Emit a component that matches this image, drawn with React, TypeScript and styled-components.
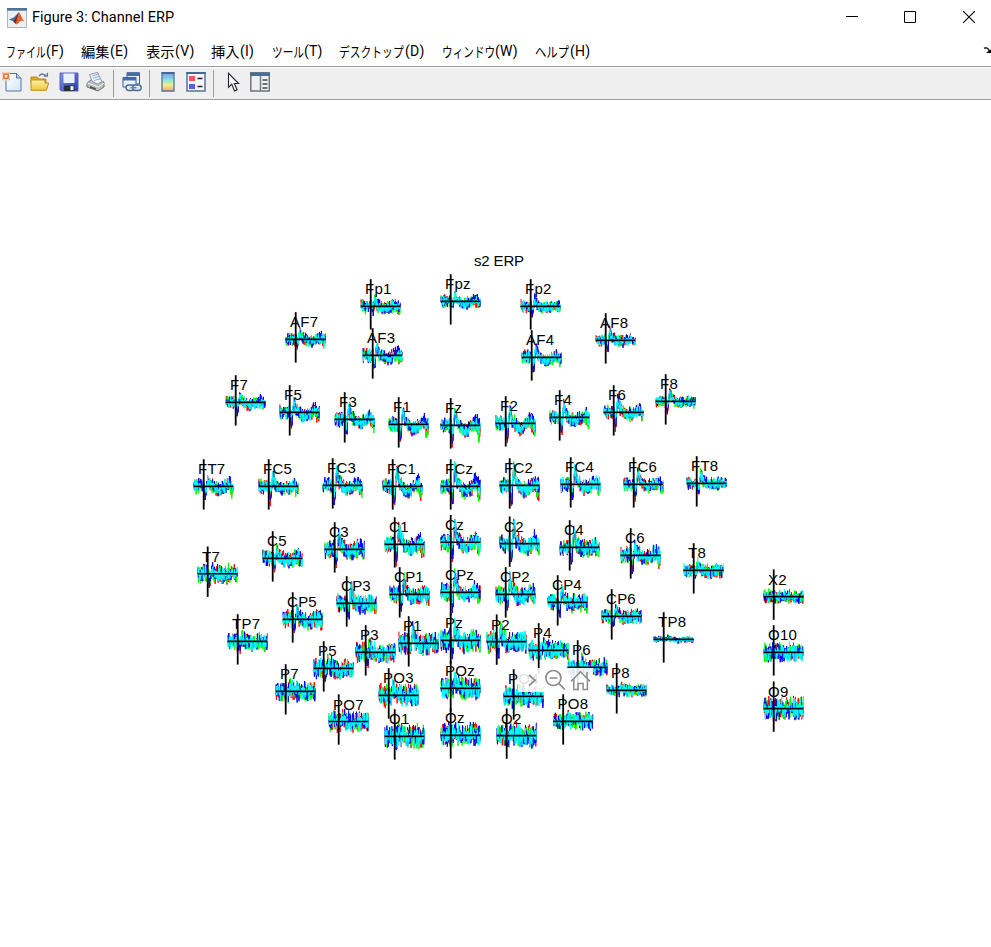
import React from "react";
import styled, { createGlobalStyle } from "styled-components";

const GlobalStyle = createGlobalStyle`
  html, body { margin: 0; padding: 0; background: #fff; }
  body { overflow: hidden; }
`;

const Window = styled.div`
  width: 991px;
  height: 947px;
  display: flex;
  flex-direction: column;
  background: #fff;
  color: #000;
  font-family: Roboto, "Noto Sans CJK JP", sans-serif;
`;

const TitleBar = styled.header`
  display: flex;
  align-items: center;
  height: 35px;
  padding-left: 7px;
  box-sizing: border-box;
`;

const AppIcon = styled.svg`
  width: 20px;
  height: 20px;
  margin-right: 5px;
`;

const Title = styled.h1`
  margin: 0;
  flex: 1;
  font-size: 14.5px;
  font-weight: 400;
  line-height: 20px;
  letter-spacing: 0.03px;
  white-space: nowrap;
`;

const CaptionButton = styled.button`
  width: 58.5px;
  height: 34px;
  padding: 0;
  border: 0;
  background: none;
  display: flex;
  align-items: center;
  justify-content: center;
`;

const CaptionButtons = styled.div`
  display: flex;
  margin: -1px -7px 0 0;
`;

const MenuBar = styled.nav`
  display: flex;
  align-items: center;
  height: 31px;
  padding-left: 6px;
`;

const MenuItem = styled.div<{ $width: number }>`
  width: ${(p) => p.$width}px;
  display: flex;
  font-size: 14px;
  line-height: 20px;
  letter-spacing: 0.2px;
  white-space: nowrap;
`;

const MenuWord = styled.span<{ $width: number; $scale: number }>`
  display: block;
  width: ${(p) => p.$width}px;
  transform: scaleX(${(p) => p.$scale});
  transform-origin: left center;
  font-family: "Noto Sans CJK JP", sans-serif;
  font-weight: 400;
  letter-spacing: 0;
`;

const DockArrow = styled.svg`
  width: 8px;
  height: 10px;
  margin-left: auto;
`;

const Toolbar = styled.div`
  display: flex;
  align-items: center;
  height: 34px;
  box-sizing: border-box;
  border-top: 1px solid #989898;
  border-bottom: 1px solid #a0a0a0;
  background: #efefef;
  box-shadow: inset 0 1px #fff;
`;

const ToolButton = styled.button<{ $gap?: number }>`
  width: 20px;
  height: 22px;
  padding: 0;
  margin: 0 0 2px ${(p) => p.$gap ?? 8}px;
  border: 0;
  background: none;
  svg { display: block; }
`;

const Separator = styled.div<{ $gap: number }>`
  width: 1px;
  height: 27px;
  margin-left: ${(p) => p.$gap}px;
  background: #9c9c9c;
`;

const Figure = styled.main`
  flex: 1;
  background: #fff;
`;

const Plot = styled.svg`
  display: block;
  width: 991px;
  height: 847px;
`;

const PlotText = styled.text<{ $tracking?: number }>`
  font-family: "Liberation Sans", Arial, sans-serif;
  font-size: 15px;
  letter-spacing: ${(p) => p.$tracking ?? 0.2}px;
  fill: #000;
`;

/* label, stimulus-axis x, baseline y, peak, dip, noise, slow drift */
type Channel = [string, number, number, number, number, number, number];

const channels: Channel[] = [
  ["Fp1", 370.7, 306.4, 7, 5, 5.6, 3],
  ["Fpz", 450.7, 301.4, 6, 5, 5.2, 3],
  ["Fp2", 530.7, 306.4, 8, 7, 5, 2],
  ["AF7", 295.7, 339.4, 8, 7, 5.4, 2],
  ["AF3", 372.7, 355.4, 12, 11, 5.8, 5],
  ["AF4", 531.7, 357.4, 13, 12, 5.6, 5],
  ["AF8", 605.7, 340.4, 12, 10, 5, 1],
  ["F7", 235.7, 402.4, 7, 10, 5.2, 3],
  ["F5", 289.7, 412.4, 13, 15, 5.8, 5],
  ["F3", 344.7, 419.4, 17, 15, 6, 6],
  ["F1", 398.7, 424.4, 18, 18, 6.2, 7],
  ["Fz", 450.7, 425.4, 18, 18, 6.2, 8],
  ["F2", 505.7, 423.4, 18, 18, 6.2, 7],
  ["F4", 559.7, 417.4, 16, 18, 6, 5],
  ["F6", 613.7, 412.4, 16, 17, 5.6, 3],
  ["F8", 665.7, 401.4, 12, 11, 4.6, 1],
  ["FT7", 203.7, 486.4, 7, 10, 6, 3],
  ["FC5", 268.7, 486.4, 12, 14, 6, 4],
  ["FC3", 332.7, 485.4, 19, 17, 6.2, 5],
  ["FC1", 392.7, 486.4, 21, 19, 6.4, 7],
  ["FCz", 450.7, 486.4, 24, 19, 6.6, 8],
  ["FC2", 509.7, 485.4, 21, 19, 6.4, 7],
  ["FC4", 570.7, 484.4, 19, 18, 6.2, 5],
  ["FC6", 633.7, 484.4, 15, 15, 5.6, 3],
  ["FT8", 696.7, 483.4, 12, 11, 5, 1],
  ["T7", 207.7, 573.7, 4, 8, 7.8, 2],
  ["C5", 272.7, 558.4, 10, 12, 6.8, 3],
  ["C3", 334.7, 549.4, 20, 17, 7.4, 3],
  ["C1", 394.7, 544.4, 23, 18, 7.4, 5],
  ["Cz", 450.7, 542.2, 23, 17, 7.4, 6],
  ["C2", 509.7, 543.6, 23, 18, 7.4, 5],
  ["C4", 569.7, 547.4, 18, 17, 7.4, 3],
  ["C6", 630.7, 555.4, 12, 17, 7.2, 3],
  ["T8", 693.7, 570.4, 7, 4, 5.8, 1],
  ["TP7", 237.7, 641.4, 5, 5, 7.2, 2],
  ["CP5", 292.7, 619.4, 10, 11, 7.4, 3],
  ["CP3", 346.7, 603.4, 20, 15, 7.6, 3],
  ["CP1", 399.7, 594.4, 19, 14, 7.6, 4],
  ["CPz", 450.7, 592.4, 20, 15, 7.6, 5],
  ["CP2", 505.7, 594.4, 19, 14, 7.6, 4],
  ["CP4", 557.7, 602.4, 16, 14, 7.4, 2],
  ["CP6", 611.7, 616.4, 10, 6, 6, 1],
  ["TP8", 663.7, 639.4, 2, 1, 2.7, 1],
  ["P7", 285.7, 691.4, 6, 4, 8, 0],
  ["P5", 323.7, 668.4, 6, 8, 8.4, 2],
  ["P3", 365.7, 652.4, 10, 10, 8.6, 2],
  ["P1", 408.7, 643.4, 15, 11, 9, 2],
  ["Pz", 450.7, 640.4, 15, 11, 9, 3],
  ["P2", 496.7, 641.6, 13, 10, 9, 2],
  ["P4", 538.7, 650.4, 9, 7, 8, 1],
  ["P6", 577.7, 667.4, 6, 5, 7.6, 1],
  ["P8", 616.7, 690.4, 5, 2, 5.4, 0],
  ["PO7", 338.7, 721.5, 5, 3, 8.2, 0],
  ["PO3", 388.7, 695.4, 8, 7, 9, 0],
  ["POz", 450.7, 688.4, 10, 4, 9.2, 0],
  ["PO4", 513.7, 696.4, 8, 4, 9, 0],
  ["PO8", 563.2, 721.4, 5, 3, 7.2, 0],
  ["O1", 394.7, 736.4, 5, 2, 9.6, 0],
  ["Oz", 450.7, 735.4, 5, 2, 9.6, 0],
  ["O2", 506.7, 735.6, 5, 2, 9.6, 0],
  ["X2", 773.7, 596.6, 0, 1, 5.8, 0],
  ["O10", 773.7, 652.4, 1, 1, 8, 0],
  ["O9", 773.7, 708.6, 2, 1, 9.8, 0],
];

const traceColors = ["#ff0000", "#00ff00", "#0000ff", "#00ffff"];

const bump = (t: number, center: number, width: number) =>
  Math.exp(-(((t - center) / width) ** 2));

function makeRandom(seed: number) {
  let state = (Math.imul(seed, 2654435761) >>> 0) || 1;
  return () => {
    state = (state + 0x6d2b79f5) >>> 0;
    let z = Math.imul(state ^ (state >>> 15), state | 1);
    z ^= z + Math.imul(z ^ (z >>> 7), z | 61);
    return ((z ^ (z >>> 14)) >>> 0) / 4294967296;
  };
}

function tracePath(channel: Channel, index: number, color: number) {
  const [, x, y, peak, dip, noise, slow] = channel;
  const random = makeRandom(index * 17 + color * 101 + 7);
  const gain = color === 3 ? 1.05 : 1.12;
  let d = "";
  for (let step = 0; step <= 80; step++) {
    const t = (step * 39.4) / 80;
    let v = -peak * 0.78 * bump(t, 14, 1.3) - peak * 0.2 * bump(t, 17, 2.5);
    v += dip * bump(t, 11.8, 1.1) * (color === 3 ? 0.3 : color === 1 ? 0.6 : 1);
    v += slow * 0.65 * bump(t, 24.5, 5);
    v -= slow * (color === 2 ? 1.05 : 0.3) * bump(t, 35, 2.6);
    v += slow * (color < 2 ? 1.3 : 0.2) * bump(t, 38, 2);
    const sign = step % 2 ? 1 : -1;
    v += sign * noise * gain * (0.02 + 1.05 * random() ** 1.55) + (random() - 0.5) * noise * 0.5;
    const limited = Math.max(-26, Math.min(22, v));
    d += `${step ? "L" : "M"}${(x - 9.8 + t).toFixed(1)} ${(y + limited).toFixed(1)}`;
  }
  return d;
}

function ChannelPlot({ channel, index }: { channel: Channel; index: number }) {
  const [label, x, y] = channel;
  return (
    <g>
      {traceColors.map((stroke, i) => (
        <path key={stroke} d={tracePath(channel, index, i)} fill="none" stroke={stroke} strokeWidth="1" strokeLinejoin="bevel" />
      ))}
      <path d={`M${x - 10} ${y}h39.6`} stroke="#000" strokeWidth="1.6" />
      <path d={`M${x} ${y - 27.2}v50.4`} stroke="#000" strokeWidth="1.8" />
      <PlotText x={x - 5.6} y={y - 12}>{label}</PlotText>
    </g>
  );
}

function ScalpPlot() {
  return (
    <Plot viewBox="0 100 991 847">
      <PlotText $tracking={-0.15} x="474" y="265.6">s2 ERP</PlotText>
      {channels.map((channel, i) => (
        <ChannelPlot key={channel[0]} channel={channel} index={i} />
      ))}
      <rect x="518" y="668" width="75" height="24" fill="#fff" fillOpacity="0.88" />
      <g fill="none" stroke="#8c8c8c" strokeWidth="1.7">
        <path d="M529 675l6 5.3-6 5.2" />
        <circle cx="553.4" cy="678" r="7.5" />
        <path d="M549.5 678h8M558.8 683.4l6 6" />
        <path d="M571 681.4l9.5-9.6 9.5 9.6M573.8 679v10.5h4.3v-6h5v6h4.3V679M587 678v-6" strokeWidth="1.5" />
      </g>
    </Plot>
  );
}

const menus: { word: string; key: string; width: number; wordWidth: number; scale: number }[] = [
  { word: "ファイル", key: "(F)", width: 75, wordWidth: 40, scale: 0.71 },
  { word: "編集", key: "(E)", width: 65, wordWidth: 29, scale: 1.02 },
  { word: "表示", key: "(V)", width: 65, wordWidth: 29, scale: 1.02 },
  { word: "挿入", key: "(I)", width: 61, wordWidth: 29, scale: 1.02 },
  { word: "ツール", key: "(T)", width: 67, wordWidth: 32, scale: 0.76 },
  { word: "デスクトップ", key: "(D)", width: 103, wordWidth: 66, scale: 0.77 },
  { word: "ウィンドウ", key: "(W)", width: 93, wordWidth: 53, scale: 0.76 },
  { word: "ヘルプ", key: "(H)", width: 60, wordWidth: 35, scale: 0.81 },
];

function Gradients() {
  return (
    <defs>
      <linearGradient id="paper" x2="1" y2="1"><stop stopColor="#fff" /><stop offset="1" stopColor="#d3e5f8" /></linearGradient>
      <linearGradient id="folder" x2="0" y2="1"><stop stopColor="#fff4a8" /><stop offset="1" stopColor="#efc53c" /></linearGradient>
      <linearGradient id="disk" x2="1" y2="1"><stop stopColor="#8292ea" /><stop offset="1" stopColor="#2b3aa8" /></linearGradient>
      <linearGradient id="colorbar" x2="0" y2="1"><stop stopColor="#8a8ee8" /><stop offset=".35" stopColor="#7be0e8" /><stop offset=".65" stopColor="#eef08c" /><stop offset="1" stopColor="#f5a47e" /></linearGradient>
    </defs>
  );
}

const icon = { width: 20, height: 20, viewBox: "0 0 20 20" };

const NewIcon = () => (
  <svg {...icon}><Gradients />
    <path d="M4 1.5h10.5l4.5 4.5V19H4z" fill="url(#paper)" stroke="#5576a3" />
    <path d="M14.5 1.5V6H19" fill="#b8d0ec" stroke="#5576a3" />
    <path d="M0 0h8v8.5H0z" fill="#f8d6bf" />
    <circle cx="4" cy="4.2" r="2.3" fill="#fff2a0" stroke="#dd6537" strokeWidth="1.4" />
    <path d="M.5.7L2 2.2M7.5.7L6 2.2M.5 7.7L2 6.2M7.5 7.7L6 6.2" stroke="#e27a4b" />
  </svg>
);

const OpenIcon = () => (
  <svg {...icon}>
    <path d="M1 5h6l2 2h7v4H1z" fill="#dfaa27" stroke="#b98618" />
    <path d="M1 18.3V8h14v3h3.7l-2.3 7.3z" fill="url(#folder)" stroke="#c08d1a" />
    <path d="M9 4c2.5-3 6-2.4 7 .5M13.8 4h3.6V.8" fill="none" stroke="#5b7898" strokeWidth="1.3" />
  </svg>
);

const SaveIcon = () => (
  <svg {...icon}>
    <path d="M1 1h18v18H2.5L1 17.5z" fill="url(#disk)" stroke="#5862b8" />
    <path d="M4.5 1.5h11V11h-11z" fill="#e9f2fc" />
    <path d="M5 13.5h10.5V19H5z" fill="#25303f" /><path d="M11.5 14.2h3v4h-3z" fill="#fff" />
  </svg>
);

const PrintIcon = () => (
  <svg {...icon}>
    <path d="M1 11l5-4 12 3v5l-6 4-11-4z" fill="#b9bbbd" stroke="#777b82" />
    <path d="M1.3 11l11.2 4 5.7-4" fill="none" stroke="#f5f5f5" />
    <path d="M6 9L3.5 2.5l8-2L16 10l-5 2z" fill="#eef4ff" stroke="#8e96a4" />
    <path d="M6 4l6-1.7M7 6.2l6-1.7M8 8.5l6-1.6" stroke="#8da8cf" />
    <path d="M4 14l6 2.2v1.7l-6-2z" fill="#555" /><path d="M14 15.5l2-1.2" stroke="#d6c55a" strokeWidth="1.5" />
  </svg>
);

const LinkIcon = () => (
  <svg {...icon}>
    <path d="M5 .7h12.5V12H5z" fill="#e5effc" stroke="#365f99" /><path d="M5 1h12.5v3H5z" fill="#426eaa" />
    <path d="M1 5.5h13V15H1z" fill="#edf5ff" stroke="#365f99" /><path d="M1 5.5h13v3H1z" fill="#426eaa" />
    <rect x="4" y="13" width="8.5" height="5.5" rx="2.7" fill="#dfe9f4" stroke="#516c8e" strokeWidth="1.4" />
    <rect x="10.7" y="13" width="8.5" height="5.5" rx="2.7" fill="#dfe9f4" stroke="#516c8e" strokeWidth="1.4" />
    <path d="M8.5 15.7h6" stroke="#6985a4" strokeWidth="1.5" />
  </svg>
);

const ColorbarIcon = () => (
  <svg {...icon}><path d="M4 1h12v18H4z" fill="url(#colorbar)" stroke="#58739a" strokeWidth="1.3" /><path d="M3.5 1h13" stroke="#456894" strokeWidth="2" /></svg>
);

const LegendIcon = () => (
  <svg {...icon}>
    <path d="M1 1h18v18H1z" fill="#f4f7ff" stroke="#54739c" strokeWidth="1.5" /><path d="M.3 1h19.4" stroke="#456894" strokeWidth="2" />
    <path d="M3 4h6v5H3z" fill="#ee5a57" /><path d="M3 12h6v5H3z" fill="#5b5de8" />
    <path d="M11.5 6.5h5M11.5 14.5h5" stroke="#222" strokeWidth="1.5" />
  </svg>
);

const PointerIcon = () => (
  <svg {...icon}><path d="M5.5 1.3v14l3.3-3 2.7 6.6 2.6-1.1-2.8-6.3h4.3z" fill="#fff" stroke="#252b34" strokeWidth="1.15" /></svg>
);

const InspectorIcon = () => (
  <svg {...icon}>
    <path d="M.8 1h18.5v18H.8z" fill="#eef0f1" stroke="#6f767c" strokeWidth="1.5" />
    <path d="M0 .3h20V4H0z" fill="#4a6e91" /><path d="M10.5 4v15" stroke="#7b7f82" strokeWidth="1.5" />
    <path d="M12.5 8h5M12.5 12h5M12.5 16h5" stroke="#444" strokeWidth="1.4" />
  </svg>
);

export default function App() {
  return (
    <Window>
      <GlobalStyle />
      <TitleBar>
        <AppIcon viewBox="0 0 20 20">
          <path d="M.5.5h19v19H.5z" fill="#edf0f2" stroke="#afb7bf" /><path d="M0 0h20v2.7H0z" fill="#507394" />
          <path d="M2 11.5l5-2.3L12 4l-3.2 10.5-2.6-1.2z" fill="#3b76a9" />
          <path d="M6.2 13.3L12 4l-2 9.2-1.5 2.7z" fill="#7d2b28" />
          <path d="M12 4c1.6 2.4 2.9 6.3 5.5 10-2.7-2.1-4-1.2-5.5.5-1.2 1.4-2 2.1-3.3 1.7z" fill="#df6424" />
        </AppIcon>
        <Title>Figure 3: Channel ERP</Title>
        <CaptionButtons>
          <CaptionButton aria-label="Minimize"><svg width="12" height="12"><path d="M0 5.5h12" stroke="#000" /></svg></CaptionButton>
          <CaptionButton aria-label="Maximize"><svg width="12" height="12"><path d="M.5.5h11v11H.5z" fill="none" stroke="#000" /></svg></CaptionButton>
          <CaptionButton aria-label="Close"><svg width="12" height="12"><path d="M0 0l12 12M12 0L0 12" stroke="#000" strokeWidth="1.1" /></svg></CaptionButton>
        </CaptionButtons>
      </TitleBar>
      <MenuBar>
        {menus.map((menu) => (
          <MenuItem key={menu.word} $width={menu.width}>
            <MenuWord $width={menu.wordWidth} $scale={menu.scale}>{menu.word}</MenuWord>
            {menu.key}
          </MenuItem>
        ))}
        <DockArrow viewBox="0 0 8 10"><path d="M1 2.3c3-1 4.5.2 5.3 3" fill="none" stroke="#333" strokeWidth="1.7" /><path d="M3 7h6V2.5z" fill="#000" /></DockArrow>
      </MenuBar>
      <Toolbar>
        <ToolButton $gap={2} aria-label="New"><NewIcon /></ToolButton>
        <ToolButton aria-label="Open"><OpenIcon /></ToolButton>
        <ToolButton $gap={9} aria-label="Save"><SaveIcon /></ToolButton>
        <ToolButton $gap={7} aria-label="Print"><PrintIcon /></ToolButton>
        <Separator $gap={7} />
        <ToolButton aria-label="Link"><LinkIcon /></ToolButton>
        <Separator $gap={7} />
        <ToolButton aria-label="Colorbar"><ColorbarIcon /></ToolButton>
        <ToolButton aria-label="Legend"><LegendIcon /></ToolButton>
        <Separator $gap={7} />
        <ToolButton $gap={9} aria-label="Select"><PointerIcon /></ToolButton>
        <ToolButton $gap={7} aria-label="Inspector"><InspectorIcon /></ToolButton>
      </Toolbar>
      <Figure><ScalpPlot /></Figure>
    </Window>
  );
}
